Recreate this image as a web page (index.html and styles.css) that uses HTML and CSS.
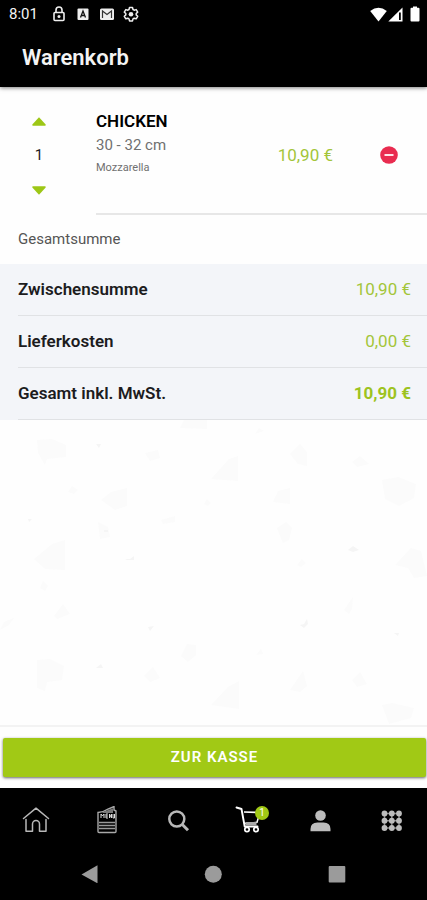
FILE: index.html
```html
<!DOCTYPE html>
<html lang="de">
<head>
<meta charset="utf-8">
<meta name="viewport" content="width=device-width, initial-scale=1">
<title>Warenkorb</title>
<link rel="stylesheet" href="styles.css">
</head>
<body>
<div class="app">
  <header class="top">
    <div class="status">
      <span class="time">8:01</span>
      <svg class="s-icon" viewBox="0 0 16 16" aria-hidden="true"><rect x="3" y="6.500" width="10" height="8" rx="1" fill="none" stroke="#eee" stroke-width="1.600"/><path d="M5 6.500V4a3 3 0 0 1 6 0v2.500" fill="none" stroke="#eee" stroke-width="1.600"/><circle cx="8" cy="10.500" r="1.500" fill="#eee"/></svg>
      <svg class="s-icon" viewBox="0 0 16 16" aria-hidden="true"><rect x="2.500" y="2.500" width="11" height="11.500" rx="1" fill="#eee"/><path d="M5.500 11.500L8 5l2.500 6.500M6.300 9.500h3.400" fill="none" stroke="#111" stroke-width="1.300"/></svg>
      <svg class="s-icon" viewBox="0 0 16 16" aria-hidden="true"><rect x="1" y="2.500" width="14" height="11.500" rx="1.500" fill="#eee"/><path d="M3.500 12V5L8 8.500 12.500 5v7" fill="none" stroke="#333" stroke-width="1.200"/></svg>
      <svg class="s-icon" viewBox="0 0 16 16" aria-hidden="true"><path d="M6.500 1.500h3l.5 2 1.200.7 2-.6 1.500 2.500L13.200 7.500v1.400l1.500 1.400-1.500 2.500-2-.6-1.200.7-.5 2h-3l-.5-2-1.200-.7-2 .6-1.500-2.500 1.500-1.400V7.500L1.300 6.100l1.500-2.500 2 .6L6 3.500z" fill="none" stroke="#eee" stroke-width="1.500" stroke-linejoin="round"/><circle cx="8" cy="8.200" r="2.300" fill="#eee"/></svg>
      <span class="signals">
        <svg class="wifi" viewBox="0 0 17 15" aria-hidden="true"><path d="M.2 4Q8.500-2.600 16.800 4L8.500 14.500z" fill="#fff"/></svg>
        <svg class="cell" viewBox="0 0 15 15" aria-hidden="true"><path d="M14.500.5v14H.3z" fill="#fff"/><path d="M11 5.500h1.800v7.500H11z" fill="#000"/></svg>
        <svg class="battery" viewBox="0 0 10 16" aria-hidden="true"><path d="M3 .5h4v1.300h1.500q1 0 1 1V14.500q0 1-1 1h-7q-1 0-1-1V2.800q0-1 1-1H3z" fill="#fff"/></svg>
      </span>
    </div>
    <h1 class="title">Warenkorb</h1>
  </header>

  <main class="content">
    <section class="item">
      <div class="stepper">
        <button class="step" type="button" aria-label="Menge erhöhen"><svg viewBox="0 0 14 9" aria-hidden="true"><path d="M7 .3L13.700 7.500q.2 1.200-.7 1.200H1Q.1 8.700.3 7.500z" fill="#9dc716"/></svg></button>
        <span class="qty">1</span>
        <button class="step" type="button" aria-label="Menge verringern"><svg viewBox="0 0 14 9" aria-hidden="true"><path d="M7 8.700L13.700 1.500Q13.900.3 13 .3H1Q.1.300.3 1.500z" fill="#9dc716"/></svg></button>
      </div>
      <div class="details">
        <div class="info">
          <h2 class="name">CHICKEN</h2>
          <p class="size">30 - 32 cm</p>
          <p class="extra">Mozzarella</p>
        </div>
        <span class="price">10,90 €</span>
        <button class="remove" type="button" aria-label="Entfernen"><svg viewBox="0 0 18 18" aria-hidden="true"><circle cx="9" cy="9" r="8.800" fill="#e92c50"/><path d="M4.500 9h9" stroke="#ffe4e9" stroke-width="2"/></svg></button>
      </div>
    </section>

    <h2 class="caption">Gesamtsumme</h2>
    <dl class="totals">
      <div class="row"><dt>Zwischensumme</dt><dd>10,90 €</dd></div>
      <div class="row"><dt>Lieferkosten</dt><dd>0,00 €</dd></div>
      <div class="row sum"><dt>Gesamt inkl. MwSt.</dt><dd>10,90 €</dd></div>
    </dl>
    <div class="backdrop">
      <svg viewBox="0 0 427 305" preserveAspectRatio="xMidYMid slice" aria-hidden="true">
        <g fill="#fbfbfb">
          <path d="M37 20l15-1 14 6v12l-19 2-2 6-7-12zM180 8l4-8 23 0v9zM145 33l13-3 2 8-10 3zM211 59l18-20 9-3v25zM290 34l10-10 7 8v14l-9-2zM352 42l8-6 9 8-12 3zM101 80l10-8 16-4v18l-12 4zM273 82l5-11 12-3v16zM382 60l16-3 18 7-2 14-15 8-14-7zM161 100l14-4v6l-12 2zM98 102l10 5 2 10-10 2zM277 108l9-6 6 6-3 12-6 3-4-10zM34 139l18-15 13-4v30l-20-1zM395 145l16-17 10 3 6 25-13 2-6-10zM54 196l9-12 7 10-13 5zM344 190l9-13-1 12-3 5zM181 236l6-12 9 1v10l-8 7zM37 240l13-1 14 7-2 14-15 2-2 9-8-3zM144 256l9-9 7 11-10 4zM211 285l17-18 11-6v28zM290 270l13-19 4 15-7 6zM352 260l8-8 7 12-10 3zM382 285l10-2 22 5-3 10-22 6z"/>
          <path d="M68 72l4-6 6 4-4 4zM204 84l3-5 4 4-3 3zM297 145l5-6 4 4-5 4zM40 168l3-7 5 5-3 5zM0 210l4-8 10-4-5 7zM255 14l4-6 5 3zM256 235l5-6 2 5z"/>
        </g>
        <path d="M96 24h5l-2 4zM28 99h4l-3 3zM104 110h4v2h-4zM125 139h5l4-3v4h-7zM348 130l5-4 6 4-6 2zM300 205l4-1 3-5 1 5-4 4zM148 207l6-1-4 5zM394 213h5l-1 3zM96 248l5-4 2 4z" fill="#f5f5f5"/>
      </svg>
    </div>
  </main>

  <div class="checkout"><button class="pay" type="button">ZUR KASSE</button></div>

  <footer class="bottom">
    <nav class="tabs">
      <a href="#" aria-label="Start"><svg viewBox="0 0 28 28" fill="none" stroke="#b8b8b8" stroke-width="1.500" stroke-linejoin="round" stroke-linecap="round" aria-hidden="true"><path d="M1.500 12.500L14 2.200l12.500 10.300M4 13.500V25.300h6.500V18a3.500 3.500 0 0 1 7 0v7.300H24V13.500"/></svg></a>
      <a href="#" aria-label="Speisekarte"><svg viewBox="0 0 28 28" aria-hidden="true"><path d="M5 6.500Q11 6 15 3l6-2.500v3.500l2 1v20.500q0 1-1 1H6q-1 0-1-1z" fill="none" stroke="#a8a8a8" stroke-width="1.400"/><path d="M11 5.500L20 2.200V7H9z" fill="#777"/><path d="M8 12V8l1.500 2L11 8v4M15 8h-2v4h2m-2-2h2M16.500 12V8l2 4V8M20 8v4h1.500V8" fill="none" stroke="#ddd" stroke-width="1"/><path d="M6 16.500h16M6 19.500h16M6 22.500h16" stroke="#999" stroke-width="1.500"/></svg></a>
      <a href="#" aria-label="Suche"><svg viewBox="0 0 28 28" fill="none" stroke="#b8b8b8" aria-hidden="true"><circle cx="12.800" cy="13" r="7.500" stroke-width="2.500"/><path d="M18.300 18.500l5.700 5.700" stroke-width="3"/></svg></a>
      <a href="#" class="cart" aria-label="Warenkorb"><svg viewBox="0 0 28 28" fill="none" stroke="#fff" aria-hidden="true"><path d="M1.500 1.500l5 1.500L9.700 20.500H22.500" stroke-width="1.900" stroke-linecap="round" stroke-linejoin="round"/><path d="M9 6l16 .5-3 9.800-12 1.200" stroke-width="1.500"/><path d="M10.500 16h11v3.500h-11z" fill="#aaa" stroke="none"/><circle cx="12" cy="23.500" r="2.200" stroke-width="1.700"/><circle cx="21" cy="23.500" r="2.200" stroke-width="1.700"/></svg><span class="badge">1</span></a>
      <a href="#" aria-label="Konto"><svg viewBox="0 0 28 28" fill="#bcbcbc" aria-hidden="true"><circle cx="14.500" cy="9.500" r="5.300"/><path d="M4.500 25.300V23q0-6.500 7-6.500h6q7 0 7 6.500v2.300z"/></svg></a>
      <a href="#" aria-label="Mehr"><svg viewBox="0 0 28 28" fill="#bcbcbc" aria-hidden="true"><path d="M7.500 7.500h14M7.500 14.700h14M7.500 22h14M7.500 7.500V22M14.800 7.500V22M22 7.500V22" stroke="#888" stroke-width="1.500"/><circle cx="7.500" cy="7.500" r="2.900"/><circle cx="14.800" cy="7.500" r="2.900"/><circle cx="22" cy="7.500" r="2.900"/><circle cx="7.500" cy="14.700" r="2.900"/><circle cx="14.800" cy="14.700" r="2.900"/><circle cx="22" cy="14.700" r="2.900"/><circle cx="7.500" cy="22" r="2.900"/><circle cx="14.800" cy="22" r="2.900"/><circle cx="22" cy="22" r="2.900"/></svg></a>
    </nav>
    <div class="system">
      <button type="button" aria-label="Zurück"><svg viewBox="0 0 18 18" aria-hidden="true"><path d="M.5 9.500L16.500.3v18z" fill="#9b9b9b"/></svg></button>
      <button type="button" aria-label="Home"><svg viewBox="0 0 18 18" aria-hidden="true"><circle cx="9.300" cy="9.300" r="8.500" fill="#9b9b9b"/></svg></button>
      <button type="button" aria-label="Übersicht"><svg viewBox="0 0 18 18" aria-hidden="true"><rect x=".7" y="1" width="16.600" height="16.600" rx="1" fill="#9b9b9b"/></svg></button>
    </div>
  </footer>
</div>
</body>
</html>
```
FILE: styles.css
```css
* {
  box-sizing: border-box;
}

body {
  margin: 0;
  font-family: Roboto, "Liberation Sans", sans-serif;
  color: #1c1c1e;
  background: #fefefe;
}

h1, h2, p, dl, dd {
  margin: 0;
}

button {
  padding: 0;
  border: 0;
  background: none;
  font: inherit;
  cursor: pointer;
}

svg {
  display: block;
}

.app {
  display: flex;
  flex-direction: column;
  min-height: 100vh;
}

.top {
  position: relative;
  background: #000;
  color: #f4f4f4;
  box-shadow: 0 1px 4px rgba(0, 0, 0, 0.5);
}

.status {
  display: flex;
  align-items: center;
  gap: 8px;
  height: 28px;
  padding: 0 7px 0 9px;
}

.time {
  margin-right: 5px;
  font-size: 15px;
}

.s-icon {
  width: 16px;
  height: 16px;
}

.signals {
  display: flex;
  align-items: center;
  gap: 1px;
  margin-left: auto;
}

.wifi {
  width: 17px;
  height: 15px;
}

.cell {
  width: 15px;
  height: 15px;
}

.battery {
  width: 10px;
  height: 16px;
  margin-left: 6px;
}

.title {
  padding: 0 22px;
  font-size: 22px;
  font-weight: 600;
  line-height: 59px;
}

.content {
  display: flex;
  flex: 1;
  flex-direction: column;
}

.item {
  display: flex;
}

.stepper {
  display: flex;
  flex-direction: column;
  align-items: center;
  width: 78px;
  padding: 24px 0 15px;
}

.step {
  display: grid;
  place-items: center;
  width: 24px;
  height: 20px;
}

.step svg {
  width: 14px;
  height: 9px;
}

.qty {
  font-size: 15px;
  line-height: 49px;
}

.details {
  display: flex;
  flex: 1;
  align-items: center;
  margin-left: 18px;
  padding: 22px 29px 12px 0;
  border-bottom: 2px solid #e7e7e7;
}

.info {
  flex: 1;
  align-self: flex-start;
}

.name {
  color: #000;
  font-size: 17px;
  font-weight: 600;
  line-height: 24px;
}

.size {
  color: #707070;
  font-size: 15px;
  line-height: 24px;
}

.extra {
  color: #707070;
  font-size: 11px;
  line-height: 21px;
}

.price {
  margin-right: 47px;
  color: #a3c53a;
  font-size: 17px;
}

.remove svg {
  width: 18px;
  height: 18px;
}

.caption {
  padding: 0 18px;
  color: #555;
  font-size: 15px;
  font-weight: 400;
  line-height: 49px;
}

.totals {
  padding-left: 18px;
  background: #f3f5f9;
}

.row {
  display: flex;
  justify-content: space-between;
  padding-right: 16px;
  border-bottom: 1px solid #e0e2e5;
  font-size: 17px;
  line-height: 51px;
}

.row dt {
  font-weight: 600;
}

.row dd {
  color: #a3c53a;
}

.sum dd {
  color: #9dc31f;
  font-weight: 700;
}

.backdrop {
  flex: 1;
}

.backdrop svg {
  width: 100%;
}

.checkout {
  padding: 11px 1px 11px 3px;
  border-top: 2px solid #f3f3f3;
}

.pay {
  width: 100%;
  border-radius: 2px;
  background: #a1c915;
  box-shadow: 0 1px 3px rgba(0, 0, 0, 0.6);
  color: #fff;
  font-size: 15px;
  font-weight: 600;
  letter-spacing: 1px;
  line-height: 39px;
}

.bottom {
  background: #000;
}

.tabs {
  display: grid;
  grid-template-columns: repeat(6, 1fr);
  justify-items: center;
  padding: 18px 0 16px;
}

.tabs a {
  position: relative;
}

.tabs svg {
  width: 28px;
  height: 28px;
}

.badge {
  position: absolute;
  top: 0;
  right: -6px;
  width: 14px;
  border-radius: 50%;
  background: #a1c915;
  color: #fff;
  font-size: 10px;
  line-height: 14px;
  text-align: center;
}

.system {
  display: grid;
  grid-template-columns: repeat(3, 1fr);
  justify-items: center;
  padding: 15px 28px 17px;
}

.system svg {
  width: 18px;
  height: 18px;
}
```
